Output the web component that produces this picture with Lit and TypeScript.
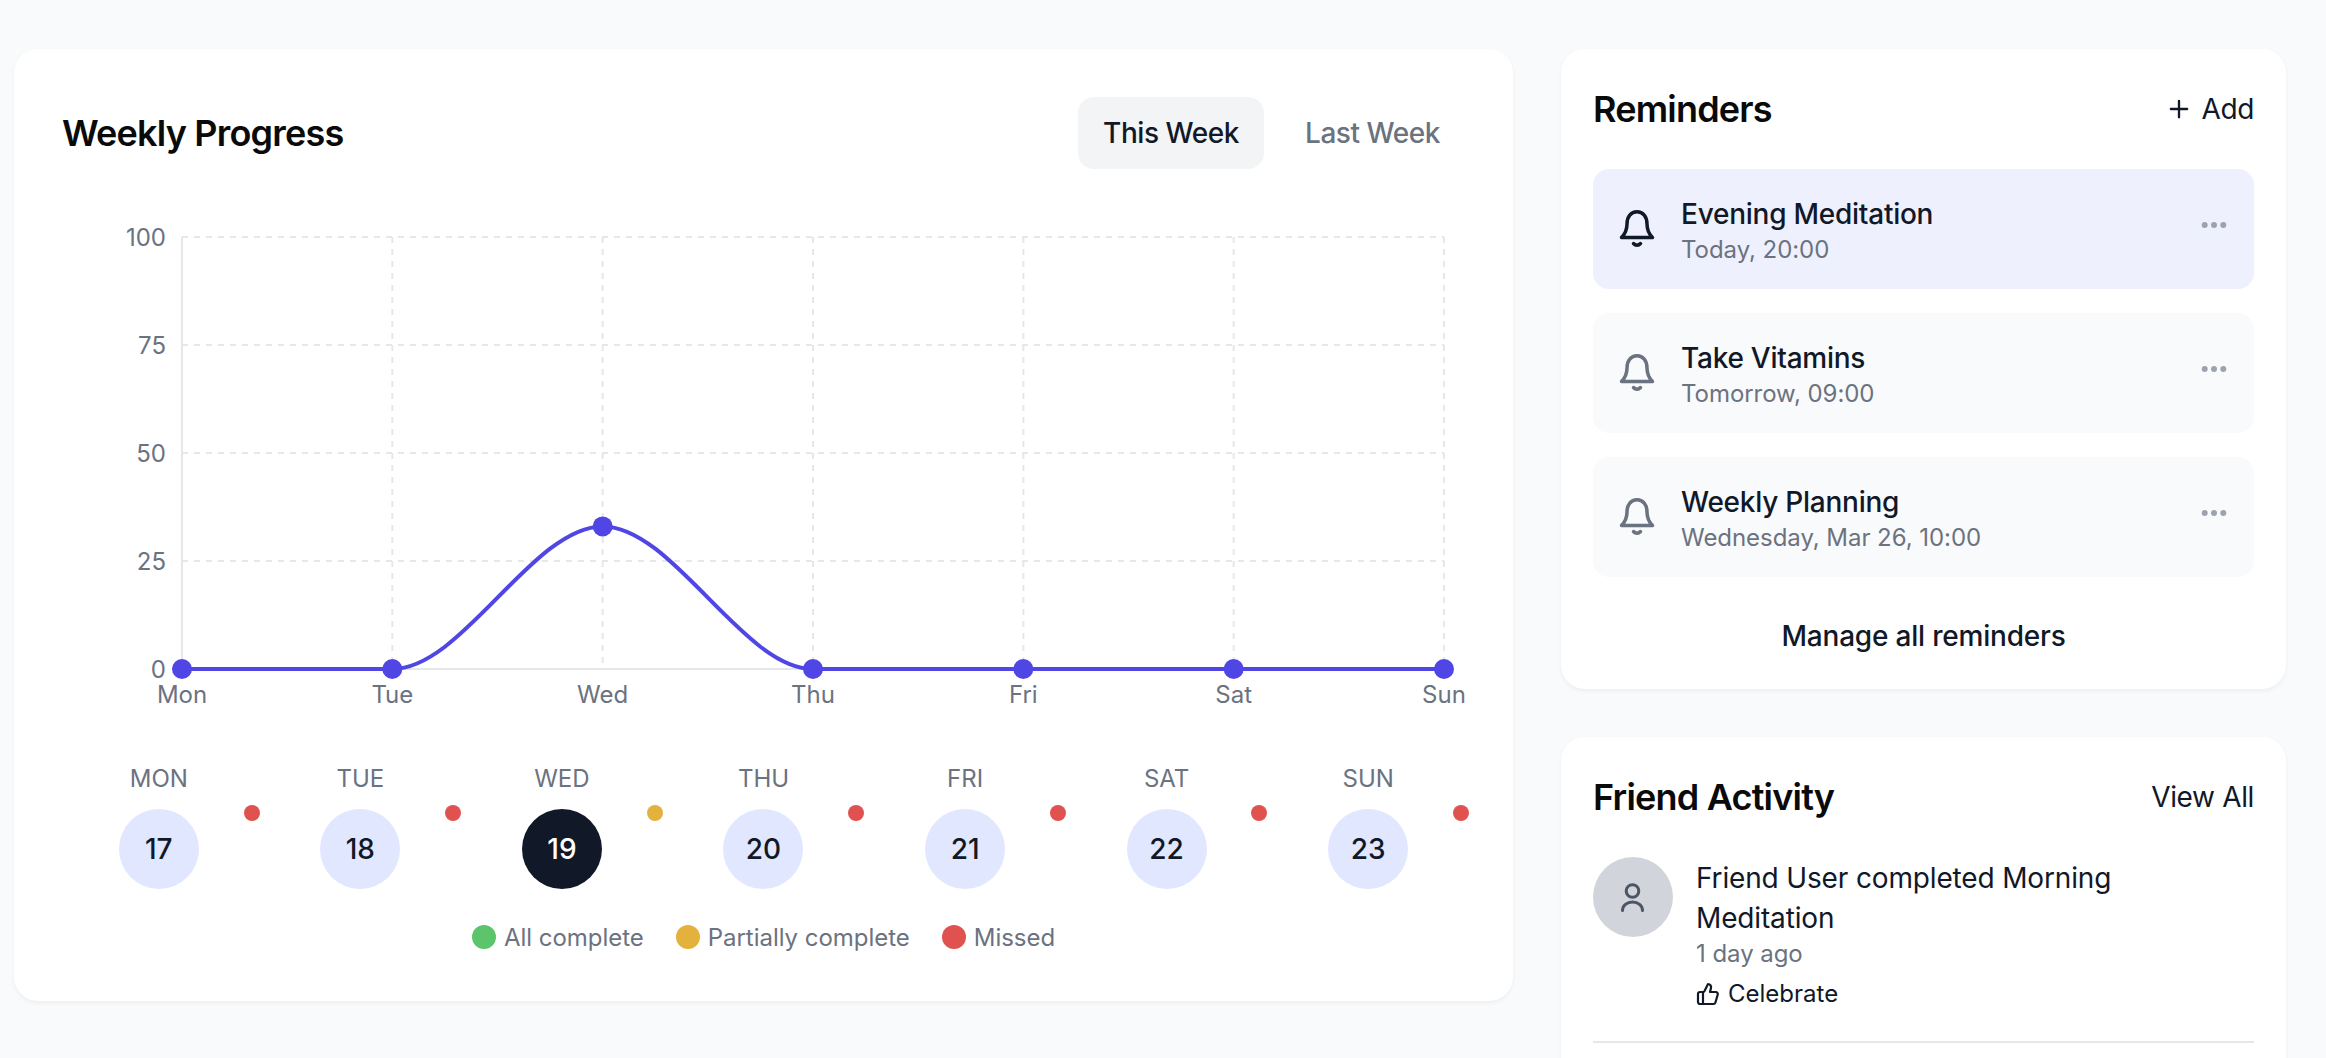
import { LitElement, html, css, svg } from "lit";
import { customElement } from "lit/decorators.js";

const XS = ["Mon", "Tue", "Wed", "Thu", "Fri", "Sat", "Sun"];
const VALUES = [0, 0, 33, 0, 0, 0, 0];
const X0 = 120;
const X1 = 1382;
const Y0 = 20;
const Y1 = 452;
const px = (i: number) => X0 + ((X1 - X0) * i) / 6;
const py = (v: number) => Y1 - ((Y1 - Y0) * v) / 100;

function linePath() {
  let d = `M${px(0)} ${py(VALUES[0])}`;
  for (let i = 1; i < VALUES.length; i++) {
    const a = px(i - 1);
    const b = px(i);
    const dx = (b - a) / 3;
    d += ` C${a + dx} ${py(VALUES[i - 1])} ${b - dx} ${py(VALUES[i])} ${b} ${py(VALUES[i])}`;
  }
  return d;
}

const bell = html`<svg class="bell" viewBox="0 0 40 40" fill="none" stroke="currentColor" stroke-width="3.500" stroke-linecap="round" stroke-linejoin="round">
  <path d="M4.5 28.5C8 25 10 21.500 10 15C10 7.500 14 2.800 20 2.800C26 2.800 30 7.500 30 15C30 21.500 32 25 35.500 28.500Z"/>
  <path d="M16.500 34.500C18.500 36.800 21.500 36.800 23.500 34.500"/>
</svg>`;

const dots = html`<svg class="more" viewBox="0 0 32 32" fill="currentColor">
  <circle cx="6.700" cy="16" r="3"/><circle cx="16" cy="16" r="3"/><circle cx="25.300" cy="16" r="3"/>
</svg>`;

@customElement("app-root")
export class AppRoot extends LitElement {
  static styles = css`
    :host {
      display: block;
      height: 1058px;
      overflow: hidden;
      background: #f9fafb;
      font-family: Inter, "Liberation Sans", sans-serif;
      color: #111827;
    }
    * { box-sizing: border-box; }
    .page {
      display: grid;
      grid-template-columns: 1499px 725px;
      gap: 48px;
      padding: 49px 0 0 14px;
      align-items: start;
    }
    .card {
      background: #fff;
      border-radius: 24px;
      box-shadow: 0 2px 4px rgba(0, 0, 0, 0.05);
    }
    .main { padding: 48px; }
    .side { display: flex; flex-direction: column; gap: 48px; }
    .side .card { padding: 32px; }
    .side .list { height: 640px; }
    .side .feed { height: 420px; }
    .head { display: flex; justify-content: space-between; align-items: center; }
    h2 { margin: 0; font-size: 36px; line-height: 56px; font-weight: 600; color: #0a0a0a; letter-spacing: -0.8px; }
    .tabs { display: flex; gap: 16px; }
    .tab {
      padding: 16px 25px;
      font-size: 28px;
      line-height: 40px;
      font-weight: 450;
      letter-spacing: -0.45px;
      border-radius: 16px;
      color: #6b7280;
    }
    .tab.on { background: #f3f4f6; color: #111827; }
    .chart { display: block; width: 1403px; height: 500px; margin: 48px 0 44px; }
    .chart text { font-family: Inter, "Liberation Sans", sans-serif; font-size: 24px; fill: #6b7280; }
    .days { display: grid; grid-template-columns: repeat(7, 1fr); gap: 8px; }
    .day { position: relative; display: flex; flex-direction: column; align-items: center; gap: 14px; }
    .day-name { font-size: 24px; line-height: 32px; padding-top: 2px; color: #6b7280; }
    .num {
      width: 80px;
      height: 80px;
      border-radius: 50%;
      background: #e0e7ff;
      display: flex;
      align-items: center;
      justify-content: center;
      font-size: 28px;
      font-weight: 450;
    }
    .num.today { background: #111827; color: #fff; }
    .mark {
      position: absolute;
      right: -4px;
      top: 44px;
      width: 16px;
      height: 16px;
      border-radius: 50%;
    }
    .green { background: #5cc46a; }
    .yellow { background: #e3b23c; }
    .red { background: #e0524f; }
    .legend { display: flex; justify-content: center; gap: 32px; margin-top: 32px; }
    .key { display: flex; align-items: center; gap: 8px; font-size: 24px; line-height: 32px; color: #6b7280; letter-spacing: -0.03px; }
    .key-text { padding-top: 2px; line-height: 30px; }
    .swatch { width: 24px; height: 24px; border-radius: 50%; }
    .link {
      display: flex;
      align-items: center;
      gap: 8px;
      font-size: 28px;
      line-height: 40px;
      font-weight: 400;
      letter-spacing: -0.35px;
      color: #111827;
    }
    .link svg { width: 28px; height: 28px; }
    .side .head { margin-bottom: 32px; }
    .rows { display: flex; flex-direction: column; gap: 24px; }
    .row {
      display: flex;
      align-items: center;
      gap: 24px;
      height: 120px;
      padding: 24px;
      border-radius: 16px;
      background: #f9fafb;
      color: #6b7280;
    }
    .row.on { background: #eef1fd; color: #111827; }
    .bell { width: 40px; height: 40px; flex: none; }
    .row-text { flex: 1; min-width: 0; padding-top: 2px; }
    .row-title { font-size: 28px; line-height: 40px; font-weight: 450; letter-spacing: -0.25px; color: #111827; }
    .sub { font-size: 24px; line-height: 32px; letter-spacing: -0.05px; color: #6b7280; }
    .more { width: 32px; height: 32px; flex: none; color: #9ca3af; align-self: flex-start; margin-top: 16px; margin-right: 0; }
    .manage { margin-top: 37px; height: 44px; justify-content: center; font-weight: 450; letter-spacing: -0.2px; }
    .activity {
      display: flex;
      gap: 23px;
      padding-bottom: 31px;
      border-bottom: 2px solid #e5e7eb;
    }
    .avatar {
      width: 80px;
      height: 80px;
      flex: none;
      border-radius: 50%;
      background: #d1d5db;
      color: #4b5563;
      display: flex;
      align-items: center;
      justify-content: center;
    }
    .avatar svg { width: 40px; height: 40px; }
    .activity-body { padding-top: 1px; }
    .activity-title { font-size: 28px; line-height: 40px; font-weight: 400; letter-spacing: -0.15px; color: #111827; }
    .cheer { display: flex; align-items: center; gap: 8px; margin-top: 8px; font-size: 24px; line-height: 32px; font-weight: 400; color: #111827; }
    .cheer svg { width: 24px; height: 24px; }
  `;

  private chart() {
    const grid = "#e5e7eb";
    return html`<svg class="chart" viewBox="0 0 1403 500">
      ${[0, 25, 50, 75, 100].map((v) => svg`
        ${v > 0 ? svg`<line x1=${X0} x2=${X1} y1=${py(v)} y2=${py(v)} stroke=${grid} stroke-width="2" stroke-dasharray="6 6"/>` : ""}
        <text x="104" y=${py(v) + 9} text-anchor="end">${v}</text>`)}
      ${XS.map((n, i) => svg`
        ${i > 0 ? svg`<line x1=${px(i)} x2=${px(i)} y1=${Y0} y2=${Y1} stroke=${grid} stroke-width="2" stroke-dasharray="6 6"/>` : ""}
        <text x=${px(i)} y="486" text-anchor="middle">${n}</text>`)}
      <line x1=${X0} x2=${X0} y1=${Y0} y2=${Y1} stroke=${grid} stroke-width="2"/>
      <line x1=${X0} x2=${X1} y1=${Y1} y2=${Y1} stroke=${grid} stroke-width="2"/>
      <path d=${linePath()} fill="none" stroke="#4f46e5" stroke-width="4"/>
      ${VALUES.map((v, i) => svg`<circle cx=${px(i)} cy=${py(v)} r="10" fill="#4f46e5"/>`)}
    </svg>`;
  }

  render() {
    const days = [
      ["MON", "17", "red"],
      ["TUE", "18", "red"],
      ["WED", "19", "yellow"],
      ["THU", "20", "red"],
      ["FRI", "21", "red"],
      ["SAT", "22", "red"],
      ["SUN", "23", "red"],
    ];
    const reminders = [
      ["Evening Meditation", "Today, 20:00", true],
      ["Take Vitamins", "Tomorrow, 09:00", false],
      ["Weekly Planning", "Wednesday, Mar 26, 10:00", false],
    ];
    return html`<div class="page">
      <section class="card main">
        <div class="head">
          <h2>Weekly Progress</h2>
          <div class="tabs">
            <div class="tab on">This Week</div>
            <div class="tab">Last Week</div>
          </div>
        </div>
        ${this.chart()}
        <div class="days">
          ${days.map(
            ([name, num, state]) => html`<div class="day">
              <div class="day-name">${name}</div>
              <div class="num ${num === "19" ? "today" : ""}">${num}</div>
              <span class="mark ${state}"></span>
            </div>`
          )}
        </div>
        <div class="legend">
          <div class="key"><span class="swatch green"></span><span class="key-text">All complete</span></div>
          <div class="key"><span class="swatch yellow"></span><span class="key-text">Partially complete</span></div>
          <div class="key"><span class="swatch red"></span><span class="key-text">Missed</span></div>
        </div>
      </section>
      <div class="side">
        <section class="card list">
          <div class="head">
            <h2>Reminders</h2>
            <div class="link">
              <svg viewBox="0 0 24 24" fill="none" stroke="currentColor" stroke-width="2" stroke-linecap="round"><path d="M5 12h14M12 5v14"/></svg>
              Add
            </div>
          </div>
          <div class="rows">
            ${reminders.map(
              ([title, when, on]) => html`<div class="row ${on ? "on" : ""}">
                ${bell}
                <div class="row-text">
                  <div class="row-title">${title}</div>
                  <div class="sub">${when}</div>
                </div>
                ${dots}
              </div>`
            )}
          </div>
          <div class="link manage">Manage all reminders</div>
        </section>
        <section class="card feed">
          <div class="head">
            <h2>Friend Activity</h2>
            <div class="link">View All</div>
          </div>
          <div class="activity">
            <div class="avatar">
              <svg viewBox="0 0 40 40" fill="none" stroke="currentColor" stroke-width="3" stroke-linecap="round">
                <circle cx="19.500" cy="14" r="6.300"/>
                <path d="M9.500 33.500C9.500 28.500 14 25 19.500 25C25 25 29.500 28.500 29.500 33.500"/>
              </svg>
            </div>
            <div class="activity-body">
              <div class="activity-title">Friend User completed Morning Meditation</div>
              <div class="sub">1 day ago</div>
              <div class="cheer">
                <svg viewBox="0 0 24 24" fill="none" stroke="currentColor" stroke-width="2.200" stroke-linecap="round" stroke-linejoin="round">
                  <path d="M7 10v12"/>
                  <path d="M15 5.880 14 10h5.830a2 2 0 0 1 1.920 2.560l-2.330 8A2 2 0 0 1 17.500 22H4a2 2 0 0 1-2-2v-8a2 2 0 0 1 2-2h2.760a2 2 0 0 0 1.790-1.110L12 2a3.130 3.130 0 0 1 3 3.880Z"/>
                </svg>
                Celebrate
              </div>
            </div>
          </div>
        </section>
      </div>
    </div>`;
  }
}
